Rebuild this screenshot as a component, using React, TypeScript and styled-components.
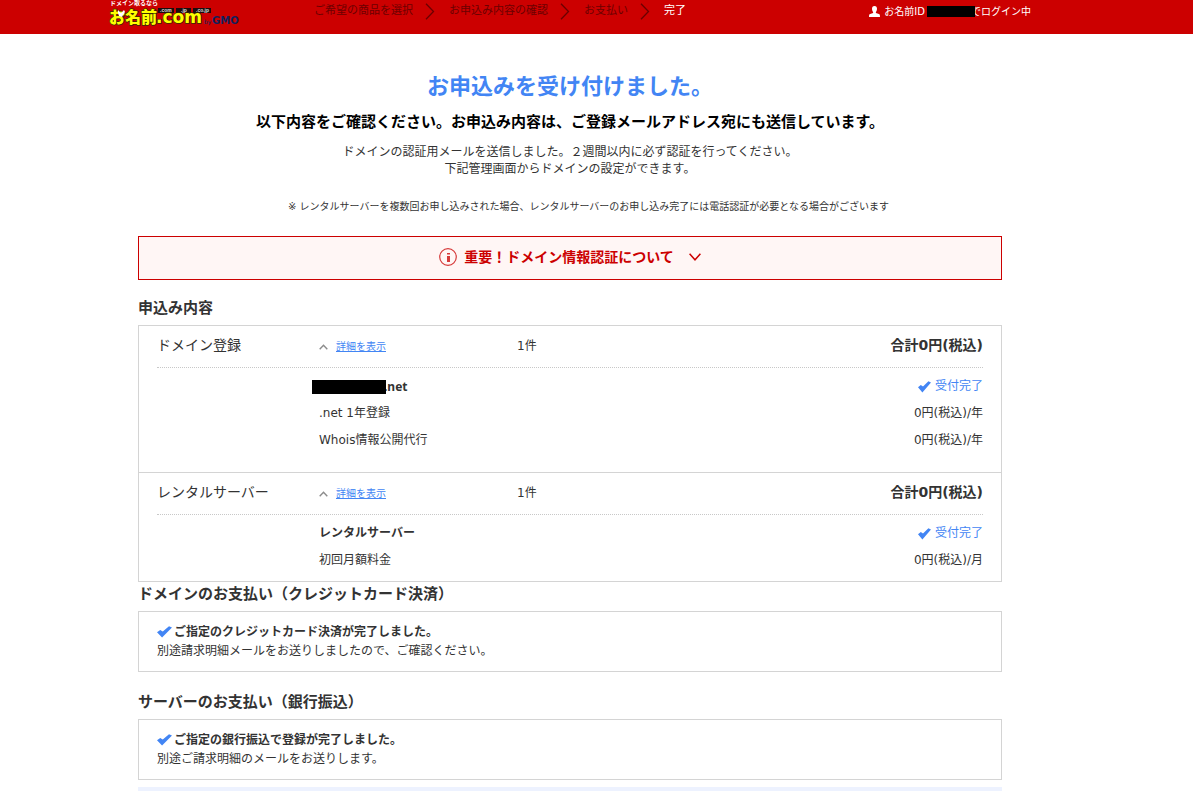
import React from "react";
import styled, { createGlobalStyle } from "styled-components";

const GlobalStyle = createGlobalStyle`
  *, *::before, *::after { box-sizing: border-box; }
  body {
    margin: 0;
    background: #fff;
    color: #333;
    font-family: "DejaVu Sans", "Noto Sans CJK JP", sans-serif;
    font-size: 12px;
    line-height: 19px;
  }
  h1, h2, p, ol, table { margin: 0; padding: 0; }
`;

const blue = "#4285f4";
const red = "#cc0000";
const line = "#d4d4d4";

const Header = styled.header`
  background: ${red};
  padding-right: 53px;
`;

const HeaderInner = styled.div`
  display: flex;
  align-items: flex-start;
  max-width: 922px;
  height: 34px;
  margin: 0 auto;
`;

const LogoLink = styled.a`
  display: block;
  width: 136px;
  height: 27px;
  flex: none;
`;

const Steps = styled.ol`
  display: flex;
  align-items: center;
  list-style: none;
  margin-left: 69px;
  height: 22px;
  flex: none;
`;

const Step = styled.li<{ $current?: boolean }>`
  display: flex;
  align-items: center;
  font-size: 11px;
  line-height: 20px;
  color: ${(p) => (p.$current ? "#fff" : "#6b0000")};

  svg {
    margin: 0 14px 0 12px;
  }
`;

const Login = styled.p`
  display: flex;
  align-items: center;
  height: 23px;
  margin-left: auto;
  flex: none;
  font-size: 10px;
  color: #fff;

  svg {
    margin-right: 4px;
  }
`;

const Mask = styled.span<{ $w: number; $h: number; $before: number; $after: number }>`
  position: relative;
  z-index: 1;
  display: inline-block;
  width: ${(p) => p.$w}px;
  height: ${(p) => p.$h}px;
  margin-left: ${(p) => p.$before}px;
  margin-right: ${(p) => p.$after}px;
  background: #000;
  vertical-align: middle;
`;

const Page = styled.div`
  padding: 38px 53px 0 0;
`;

const Main = styled.main`
  max-width: 864px;
  margin: 0 auto;
`;

const Title = styled.h1`
  font-size: 22px;
  line-height: 30px;
  text-align: center;
  color: ${blue};
`;

const Lead = styled.p`
  margin-top: 10px;
  font-size: 15px;
  line-height: 20px;
  font-weight: 700;
  text-align: center;
  color: #000;
`;

const Guide = styled.p`
  margin-top: 12px;
  line-height: 17px;
  text-align: center;
`;

const Note = styled.p`
  margin-top: 21px;
  padding-left: 37px;
  font-size: 10px;
  line-height: 16px;
  text-align: center;
`;

const Notice = styled.button`
  display: flex;
  align-items: center;
  justify-content: center;
  width: 100%;
  height: 44px;
  margin-top: 21px;
  padding: 0 0 2px;
  border: 1px solid ${red};
  border-radius: 0;
  background: #fff6f5;
  color: ${red};
  font: inherit;
  font-size: 14px;
  line-height: 20px;
  font-weight: 700;
  cursor: pointer;
`;

const NoticeText = styled.span`
  margin: 0 15px 0 7px;
`;

const Heading = styled.h2<{ $top: number }>`
  margin-top: ${(p) => p.$top}px;
  margin-bottom: 7px;
  font-size: 15px;
  line-height: 20px;
`;

const Panel = styled.div`
  border: 1px solid ${line};
`;

const Order = styled.section<{ $bottom: number }>`
  padding: 0 18px ${(p) => p.$bottom}px;

  & + & {
    border-top: 1px solid ${line};
  }
`;

const OrderHead = styled.div`
  display: grid;
  grid-template-columns: 162px 198px 1fr auto;
  align-items: center;
  padding: 9px 0 12px;
  border-bottom: 1px dotted #c8c8c8;
  line-height: 20px;
`;

const OrderName = styled.span`
  font-size: 14px;
`;

const Toggle = styled.a`
  display: flex;
  align-items: center;
  gap: 8px;
  padding-top: 4px;
  font-size: 10px;
  line-height: 16px;
  color: ${blue};
`;

const Count = styled.span`
  padding-top: 2px;
  line-height: 18px;
`;

const Total = styled.strong`
  font-size: 14px;
`;

const Items = styled.table`
  width: 100%;
  margin-top: 5px;
  border-collapse: collapse;

  td, th {
    height: 27px;
    padding: 0;
    font-weight: 400;
    text-align: left;
    vertical-align: middle;
  }
  th {
    padding-left: 162px;
  }
  td {
    text-align: right;
  }
`;

const DomainName = styled.strong`
  display: flex;
  align-items: center;
  height: 17px;
  font-family: "Noto Sans", "Noto Sans CJK JP", sans-serif;
  line-height: 17px;
`;

const Done = styled.span`
  display: flex;
  align-items: center;
  justify-content: flex-end;
  gap: 4px;
  color: ${blue};
`;

const Payment = styled(Panel)`
  padding: 11px 18px 10px;
`;

const PaymentTitle = styled.p`
  display: flex;
  align-items: center;
  gap: 2px;
  font-weight: 700;

  svg {
    margin-bottom: 2px;
  }
`;

const NextPanel = styled.div`
  height: 4px;
  margin-top: 7px;
  background: #edf2ff;
`;

const Logo = () => (
  <svg width="136" height="27" viewBox="0 0 136 27" role="img" aria-label="お名前.com by GMO">
    <g fontFamily='"Noto Sans CJK JP", sans-serif' fontWeight="700">
      <text x="1" y="5" fontSize="6" fill="#fff">ドメイン取るなら</text>
      <text x="0" y="23" fontSize="16" fontWeight="900" fill="#ff0" stroke="#3a2a00" strokeWidth="1.500" paintOrder="stroke">お名前</text>
    </g>
    <g fontFamily='"DejaVu Sans", sans-serif' fontWeight="700">
      <path d="M49 8h16v5H49zM67 8h15v5H67zM84 8h18v5H84z" fill="#1c0d0d" />
      <text x="47" y="23" fontSize="17" fill="#ff0" stroke="#3a2a00" strokeWidth="1.500" paintOrder="stroke">.com</text>
    </g>
    <g fontFamily='"Liberation Sans", sans-serif' fontWeight="700" fontSize="5" fill="#ddd">
      <text x="51" y="12">.com</text>
      <text x="72" y="12">.jp</text>
      <text x="87" y="12">.co.jp</text>
    </g>
    <path d="M9 10l3 3 3-3 1 2-2 3-1 2-3-1-1-3z" fill="#fff" />
    <g fontFamily='"DejaVu Sans", sans-serif' fill="#13205c">
      <text x="95" y="24" fontSize="6">by</text>
      <text x="103" y="24" fontSize="10" fontWeight="700">GMO</text>
    </g>
  </svg>
);

const StepArrow = () => (
  <svg width="10" height="17" viewBox="0 0 10 17" aria-hidden="true">
    <path d="M1 .8l7.500 7.700L1 16.200" fill="none" stroke="#6b0000" strokeWidth="1.300" />
  </svg>
);

const Person = () => (
  <svg width="11" height="11" viewBox="0 0 11 11" aria-hidden="true">
    <path d="M5.500 0C7.300 0 8 1.200 8 2.800S7.400 5.400 6.900 6v1l3 1c.8.3 1.100 1 1.100 3H0c0-2 .3-2.700 1.100-3l3-1V6C3.600 5.400 3 4.400 3 2.800S3.700 0 5.500 0z" fill="#fff" />
  </svg>
);

const Info = () => (
  <svg width="18" height="18" viewBox="0 0 18 18" aria-hidden="true">
    <circle cx="9" cy="9" r="8.300" fill="none" stroke="#d63a3a" strokeWidth="1.200" />
    <path d="M8 5h3v1.500H8zM8 8h3v6H8z" fill="#d63a3a" />
  </svg>
);

const Down = () => (
  <svg width="12" height="8" viewBox="0 0 12 8" aria-hidden="true">
    <path d="M.6.800L6 6.800 11.400.8" fill="none" stroke={red} strokeWidth="1.500" />
  </svg>
);

const Up = () => (
  <svg width="9" height="6" viewBox="0 0 9 6" aria-hidden="true">
    <path d="M.7 5.200l3.800-4 3.800 4" fill="none" stroke="#8c8c8c" strokeWidth="1.400" />
  </svg>
);

const Check = ({ width = 13 }: { width?: number }) => (
  <svg width={width} height="12" viewBox="0 0 13 12" preserveAspectRatio="none" aria-hidden="true">
    <path d="M0 6.300L2.800 3.900 5 5.600 10.400.200 13 1.600 4.400 11.600z" fill={blue} />
  </svg>
);

type Item = { name: React.ReactNode; value: React.ReactNode };
type OrderData = { name: string; bottom: number; items: Item[] };

const accepted = (
  <Done>
    <Check />
    受付完了
  </Done>
);

const orders: OrderData[] = [
  {
    name: "ドメイン登録",
    bottom: 18,
    items: [
      {
        name: (
          <DomainName>
            <Mask $w={74} $h={14} $before={-7} $after={-2} />
            .net
          </DomainName>
        ),
        value: accepted,
      },
      { name: ".net 1年登録", value: "0円(税込)/年" },
      { name: "Whois情報公開代行", value: "0円(税込)/年" },
    ],
  },
  {
    name: "レンタルサーバー",
    bottom: 7,
    items: [
      { name: <strong>レンタルサーバー</strong>, value: accepted },
      { name: "初回月額料金", value: "0円(税込)/月" },
    ],
  },
];

const steps = ["ご希望の商品を選択", "お申込み内容の確認", "お支払い", "完了"];

export default function App() {
  return (
    <div lang="ja">
      <GlobalStyle />
      <Header>
        <HeaderInner>
          <LogoLink href="#">
            <Logo />
          </LogoLink>
          <Steps>
            {steps.map((s, i) => {
              const last = i === steps.length - 1;
              return (
                <Step key={s} $current={last}>
                  {s}
                  {!last && <StepArrow />}
                </Step>
              );
            })}
          </Steps>
          <Login>
            <Person />
            お名前ID
            <Mask $w={48} $h={11} $before={2} $after={-4} />
            でログイン中
          </Login>
        </HeaderInner>
      </Header>
      <Page>
        <Main>
          <Title>お申込みを受け付けました。</Title>
          <Lead>以下内容をご確認ください。お申込み内容は、ご登録メールアドレス宛にも送信しています。</Lead>
          <Guide>
            ドメインの認証用メールを送信しました。２週間以内に必ず認証を行ってください。
            <br />
            下記管理画面からドメインの設定ができます。
          </Guide>
          <Note>
            ※ レンタルサーバーを複数回お申し込みされた場合、レンタルサーバーのお申し込み完了には電話認証が必要となる場合がございます
          </Note>
          <Notice type="button" aria-expanded="false">
            <Info />
            <NoticeText>重要！ドメイン情報認証について</NoticeText>
            <Down />
          </Notice>

          <Heading $top={18}>申込み内容</Heading>
          <Panel>
            {orders.map((o) => (
              <Order key={o.name} $bottom={o.bottom}>
                <OrderHead>
                  <OrderName>{o.name}</OrderName>
                  <Toggle href="#">
                    <Up />
                    詳細を表示
                  </Toggle>
                  <Count>1件</Count>
                  <Total>合計0円(税込)</Total>
                </OrderHead>
                <Items>
                  <tbody>
                    {o.items.map((it, i) => (
                      <tr key={i}>
                        <th scope="row">{it.name}</th>
                        <td>{it.value}</td>
                      </tr>
                    ))}
                  </tbody>
                </Items>
              </Order>
            ))}
          </Panel>

          <Heading $top={2}>ドメインのお支払い（クレジットカード決済）</Heading>
          <Payment>
            <PaymentTitle>
              <Check width={15} />
              ご指定のクレジットカード決済が完了しました。
            </PaymentTitle>
            <p>別途請求明細メールをお送りしましたので、ご確認ください。</p>
          </Payment>

          <Heading $top={20}>サーバーのお支払い（銀行振込）</Heading>
          <Payment>
            <PaymentTitle>
              <Check width={15} />
              ご指定の銀行振込で登録が完了しました。
            </PaymentTitle>
            <p>別途ご請求明細のメールをお送りします。</p>
          </Payment>
          <NextPanel />
        </Main>
      </Page>
    </div>
  );
}
